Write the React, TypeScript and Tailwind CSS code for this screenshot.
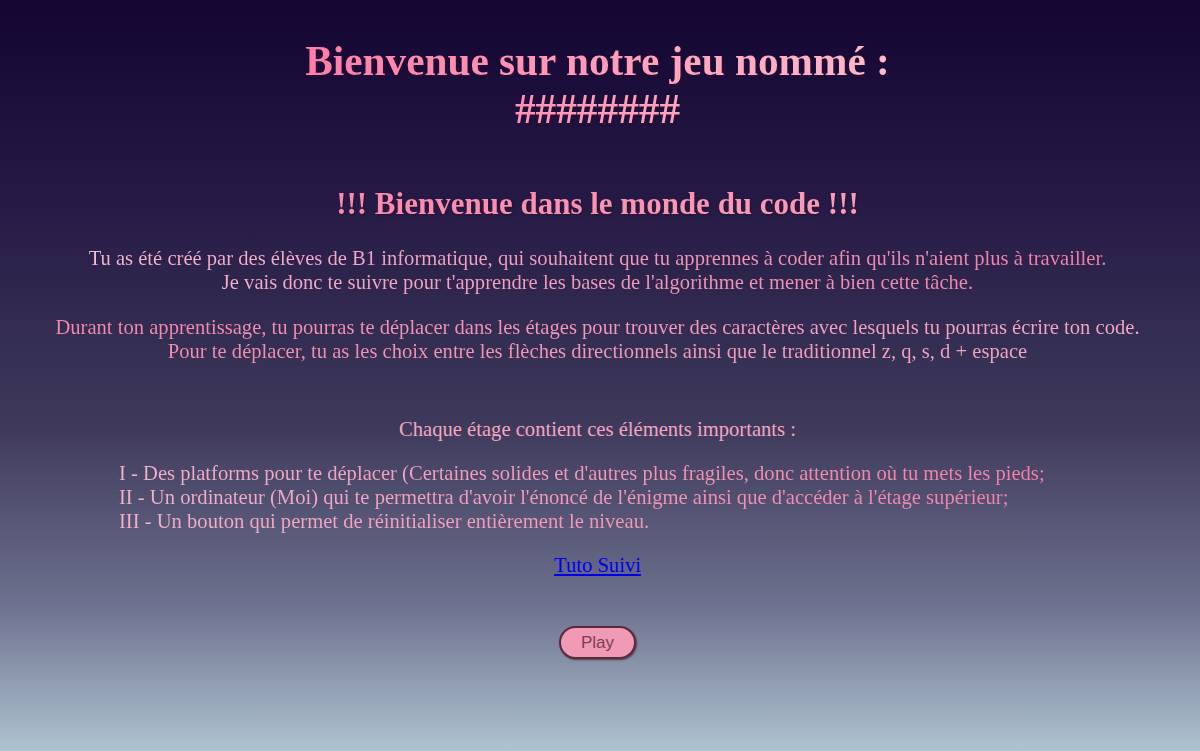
export default function App() {
  const serif = { fontFamily: '"Liberation Serif", "Times New Roman", serif' };
  return (
    <div
      className="w-full h-[751px] overflow-hidden pr-[5px] text-center text-[#f49ab9] bg-[linear-gradient(180deg,#140533_0%,#251a45_27%,#3f3a5c_57%,#6c6f8d_80%,#aec3d0_100%)]"
      style={serif}
    >
      <div className="pt-[37px] flex justify-center">
        <h1 className="w-fit text-[41.3px] leading-[48px] font-bold bg-[linear-gradient(90deg,#ff7ea8,#ffb9cc)] bg-clip-text text-transparent [filter:drop-shadow(1px_1px_1px_#2a0f2f)]">
          Bienvenue sur notre jeu nommé :<br />########
        </h1>
      </div>
      <div className="mt-[54px] flex justify-center">
        <h2 className="w-fit text-[31px] leading-[34px] font-bold bg-[linear-gradient(90deg,#f98aae,#f99bb9)] bg-clip-text text-transparent [filter:drop-shadow(1px_1px_1px_#2a0f2f)]">
          !!! Bienvenue dans le monde du code !!!
        </h2>
      </div>
      <div className="mt-[25px] flex justify-center">
        <p className="w-fit text-[20.6px] leading-[24px] bg-[linear-gradient(90deg,#f4b6d2,#f27fa8)] bg-clip-text text-transparent">
          Tu as été créé par des élèves de B1 informatique, qui souhaitent que tu apprennes à coder afin qu'ils n'aient plus à travailler.
          <br />
          Je vais donc te suivre pour t'apprendre les bases de l'algorithme et mener à bien cette tâche.
        </p>
      </div>
      <div className="mt-[21px] flex justify-center">
        <p className="w-fit text-[20.6px] leading-[24px] bg-[linear-gradient(90deg,#f288ae,#f4aac8)] bg-clip-text text-transparent">
          Durant ton apprentissage, tu pourras te déplacer dans les étages pour trouver des caractères avec lesquels tu pourras écrire ton code.
          <br />
          Pour te déplacer, tu as les choix entre les flèches directionnels ainsi que le traditionnel z, q, s, d + espace
        </p>
      </div>
      <p className="mt-[54px] text-[20.6px] leading-[24px] text-[#f4a6c4]">Chaque étage contient ces éléments importants :</p>
      <div className="mt-[20px] pl-[119px] flex">
        <p className="w-fit text-left text-[20.6px] leading-[24px] bg-[linear-gradient(90deg,#f3b2cc,#f280a8)] bg-clip-text text-transparent">
          I - Des platforms pour te déplacer (Certaines solides et d'autres plus fragiles, donc attention où tu mets les pieds;
          <br />
          II - Un ordinateur (Moi) qui te permettra d'avoir l'énoncé de l'énigme ainsi que d'accéder à l'étage supérieur;
          <br />
          III - Un bouton qui permet de réinitialiser entièrement le niveau.
        </p>
      </div>
      <p className="mt-[20px] text-[20.6px] leading-[24px]">
        <a href="#" className="text-[#0000ee] underline">Tuto Suivi</a>
      </p>
      <div className="mt-[49px] flex justify-center">
        <button
          className="w-[77px] h-[33px] rounded-full bg-[#f19ab5] border-2 border-[#5a2a3c] text-[17px] text-[#7a3f52] shadow-[1px_1px_2px_rgba(40,10,30,0.6)]"
          style={{ fontFamily: '"Liberation Sans", Arial, sans-serif' }}
        >
          Play
        </button>
      </div>
    </div>
  );
}
